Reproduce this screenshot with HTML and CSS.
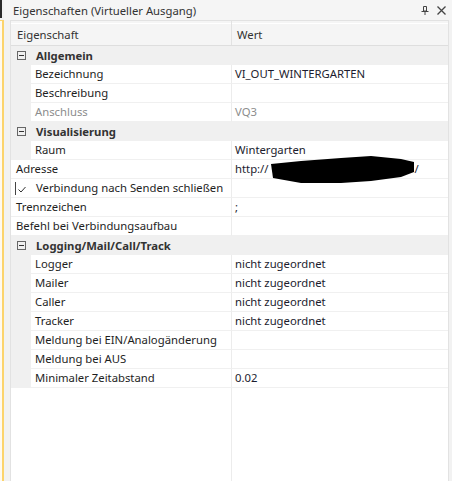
FILE: index.html
```html
<!DOCTYPE html>
<html lang="de">
<head>
    <meta charset="UTF-8">
    <title>Eigenschaften</title>
    <link rel="stylesheet" href="styles.css">
</head>
<body>
<div class="window">
    <div class="edge"><div class="edge-top"></div><div class="edge-focus"></div></div>
    <div class="panel">
        <div class="titlebar">
            <span class="title">Eigenschaften (Virtueller Ausgang)</span>
            <span class="tools">
                <svg width="8" height="9" viewBox="0 0 8 9"><path d="M2.5 0.5h3v4.5h-3z M0.5 5.5h7 M4 5.5v3.5" fill="none" stroke="#444" stroke-width="1"/></svg>
                <svg width="9" height="9" viewBox="0 0 9 9"><path d="M0.5 0.5l8 8 M8.5 0.5l-8 8" fill="none" stroke="#444" stroke-width="1.3"/></svg>
            </span>
        </div>
        <div class="gridwrap">
            <div class="grid">
                <div class="head"><div class="hname">Eigenschaft</div><div class="hval">Wert</div></div>

                <div class="cat"><span class="toggle"></span>Allgemein</div>
                <div class="row sub"><div class="indent"></div><div class="name">Bezeichnung</div><div class="val">VI_OUT_WINTERGARTEN</div></div>
                <div class="row sub"><div class="indent"></div><div class="name">Beschreibung</div><div class="val"></div></div>
                <div class="row sub off"><div class="indent"></div><div class="name">Anschluss</div><div class="val">VQ3</div></div>

                <div class="cat"><span class="toggle"></span>Visualisierung</div>
                <div class="row sub"><div class="indent"></div><div class="name">Raum</div><div class="val">Wintergarten</div></div>
                <div class="row top"><div class="name">Adresse</div><div class="val">http://<svg class="blot" width="146" height="32" viewBox="0 0 146 32"><path d="M2 10 L32 7 L72 4 L102 2 L132 5 L145 8 L145 18 L132 23 L102 27 L72 29 L32 29 L4 24 Z" fill="#000"/></svg>/</div></div>
                <div class="row top"><div class="name check"><svg width="11" height="13" viewBox="0 0 11 13" shape-rendering="crispEdges"><path d="M0.5 0v13" stroke="#444" stroke-width="1"/><path d="M3.5 7.5l2.5 2.5l4.5-5" fill="none" stroke="#333" stroke-width="1" shape-rendering="auto"/></svg><span>Verbindung nach Senden schließen</span></div><div class="val"></div></div>
                <div class="row top"><div class="name">Trennzeichen</div><div class="val">;</div></div>
                <div class="row top"><div class="name">Befehl bei Verbindungsaufbau</div><div class="val"></div></div>

                <div class="cat"><span class="toggle"></span>Logging/Mail/Call/Track</div>
                <div class="row sub"><div class="indent"></div><div class="name">Logger</div><div class="val">nicht zugeordnet</div></div>
                <div class="row sub"><div class="indent"></div><div class="name">Mailer</div><div class="val">nicht zugeordnet</div></div>
                <div class="row sub"><div class="indent"></div><div class="name">Caller</div><div class="val">nicht zugeordnet</div></div>
                <div class="row sub"><div class="indent"></div><div class="name">Tracker</div><div class="val">nicht zugeordnet</div></div>
                <div class="row sub"><div class="indent"></div><div class="name">Meldung bei EIN/Analogänderung</div><div class="val"></div></div>
                <div class="row sub"><div class="indent"></div><div class="name">Meldung bei AUS</div><div class="val"></div></div>
                <div class="row sub"><div class="indent"></div><div class="name">Minimaler Zeitabstand</div><div class="val">0.02</div></div>

                <div class="filler"><div class="name"></div><div class="val"></div></div>
            </div>
        </div>
    </div>
</div>
</body>
</html>
```

FILE: styles.css
```css
html, body {
    height: 100%;
}
body {
    margin: 0;
    font-family: 'Noto Sans', 'Open Sans', sans-serif;
    font-size: 11.3px;
    color: #1e1e1e;
    background-color: #f2f2f2;
    overflow: hidden;
}
.window {
    display: flex;
    height: 100%;
}
.edge {
    width: 4px;
    display: flex;
    flex-direction: column;
}
.edge-top {
    height: 18px;
    border-left: 2px solid #2b2b2b;
    margin-bottom: 2px;
}
.edge-focus {
    flex: 1;
    background-color: #fffaf0;
    border-right: 2px solid #fcd46c;
    border-top: 1px solid #fcd46c;
}
.panel {
    flex: 1;
    display: flex;
    flex-direction: column;
    min-width: 0;
}
.titlebar {
    height: 20px;
    display: flex;
    align-items: center;
    justify-content: space-between;
    padding: 0 6px 0 9px;
    background-color: #f5f5f5;
}
.title {
    color: #333;
}
.tools {
    display: flex;
    gap: 8px;
    align-items: center;
}
.gridwrap {
    flex: 1;
    display: flex;
    padding: 0 3px 0 6px;
}
.grid {
    flex: 1;
    display: flex;
    flex-direction: column;
    background-color: #fff;
    border: 1px solid #e2e2e2;
    border-bottom: none;
}
.head {
    display: grid;
    grid-template-columns: 221px 1fr;
    height: 25px;
    box-sizing: border-box;
    background-color: #f5f5f5;
    border-bottom: 1px solid #dedede;
    box-shadow: inset 0 2px 0 #f5f5f5, inset 0 3px 0 #fff;
    color: #333;
}
.hname {
    padding: 6px 0 0 6px;
    border-right: 1px solid #e2e2e2;
}
.hval {
    padding: 6px 0 0 5px;
}
.cat {
    height: 19px;
    line-height: 19px;
    background-color: #f0f0f0;
    display: flex;
    align-items: center;
    padding-left: 6px;
    font-weight: bold;
    color: #333;
}
.toggle {
    width: 7px;
    height: 7px;
    border: 1px solid #666;
    margin-right: 10px;
    position: relative;
}
.toggle::after {
    content: "";
    position: absolute;
    left: 1px;
    right: 1px;
    top: 3px;
    height: 1px;
    background-color: #333;
}
.row {
    display: grid;
    height: 19px;
    line-height: 18px;
}
.row.top {
    grid-template-columns: 221px 1fr;
}
.row.sub {
    grid-template-columns: 20px 201px 1fr;
}
.indent {
    background-color: #f0f0f0;
}
.name, .val {
    box-sizing: border-box;
    border-bottom: 1px solid #f0f0f0;
    white-space: nowrap;
}
.name {
    border-right: 1px solid #ececec;
    padding-left: 4px;
}
.row.top .name {
    padding-left: 5px;
}
.val {
    padding-left: 3px;
    color: #1c1c2e;
}
.row.off .name, .row.off .val {
    color: #8c8c8c;
}
.check {
    display: flex;
    align-items: center;
    overflow: hidden;
}
.row.top .check {
    padding-left: 4px;
}
.check svg {
    flex-shrink: 0;
    margin-right: 10px;
}
.blot {
    vertical-align: top;
    margin: -6px 0 -20px 0;
}
.filler {
    flex: 1;
    display: grid;
    grid-template-columns: 221px 1fr;
}
.filler .name, .filler .val {
    border-bottom: none;
}
```
